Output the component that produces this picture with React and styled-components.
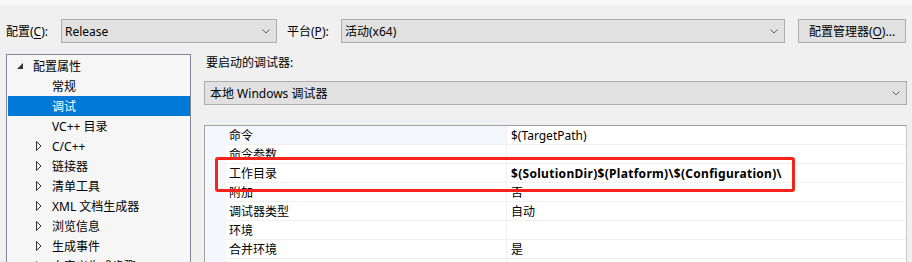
import React from "react";
import styled, { createGlobalStyle } from "styled-components";

const GlobalStyle = createGlobalStyle`
  html, body {
    margin: 0;
    padding: 0;
    height: 100%;
    overflow: hidden;
    background: #f0f0f0;
  }
  body {
    font-family: "Noto Sans", "Noto Sans CJK SC", sans-serif;
    font-size: 12px;
    color: #000;
  }
`;

const Page = styled.div`
  width: 912px;
  height: 262px;
  overflow: hidden;
  background: #f0f0f0;
  border-top: 5px solid #f9f9f9;
  box-sizing: border-box;
`;

const Toolbar = styled.div`
  display: flex;
  align-items: center;
  height: 24px;
  margin-top: 14px;
  padding-left: 6px;
`;

const Label = styled.span`
  width: ${({ w }) => w}px;
  margin-left: ${({ ml }) => ml || 0}px;
  white-space: nowrap;
  flex-shrink: 0;
`;

const Key = styled.span`
  text-decoration: underline;
  text-underline-offset: 2px;
`;

const Combo = styled.div`
  width: ${({ w }) => (w ? `${w}px` : "auto")};
  height: 24px;
  box-sizing: border-box;
  border: 1px solid #adadad;
  background: #e1e1e1;
  display: flex;
  align-items: center;
  justify-content: space-between;
  padding: 0 6px 0 3px;
  flex-shrink: 0;
`;

const Button = styled.div`
  width: 108px;
  height: 24px;
  margin-left: 13px;
  box-sizing: border-box;
  border: 1px solid #adadad;
  background: #e1e1e1;
  display: flex;
  align-items: center;
  justify-content: center;
`;

const Chevron = () => (
  <svg width="8" height="5" viewBox="0 0 8 5">
    <path d="M0.5 0.5 L4 4 L7.5 0.5" fill="none" stroke="#606060" strokeWidth="1" />
  </svg>
);

const Main = styled.div`
  display: flex;
  margin-top: 11px;
  padding-left: 6px;
`;

const Tree = styled.div`
  width: 185px;
  height: 230px;
  box-sizing: border-box;
  border: 1px solid #828790;
  background: #f6f6f6;
  padding: 1px 0 0 1px;
`;

const TreeRow = styled.div`
  height: 20px;
  display: flex;
  align-items: center;
  padding-left: ${({ level }) => (level ? 28 : 9)}px;
  background: ${({ selected }) => (selected ? "#0078d7" : "transparent")};
  color: ${({ selected }) => (selected ? "#fff" : "#000")};
  white-space: nowrap;
`;

const Expander = styled.span`
  width: 16px;
  height: 20px;
  display: flex;
  align-items: center;
  flex-shrink: 0;
`;

const Collapsed = () => (
  <svg width="6" height="10" viewBox="0 0 6 10">
    <path d="M0.5 0.5 L5 5 L0.5 9.5 Z" fill="none" stroke="#333" strokeWidth="1" />
  </svg>
);

const Expanded = () => (
  <svg width="7" height="7" viewBox="0 0 7 7">
    <path d="M6 0 L6 6 L0 6 Z" fill="#333" />
  </svg>
);

const Right = styled.div`
  margin-left: 13px;
  width: 703px;
  display: flex;
  flex-direction: column;
`;

const Caption = styled.div`
  height: 16px;
  line-height: 16px;
  padding-left: 2px;
  padding-top: 1px;
`;

const DebuggerCombo = styled(Combo)`
  margin-top: 10px;
  padding-left: 5px;
`;

const Grid = styled.div`
  position: relative;
  margin-top: 20px;
  border: 1px solid #a0a0a0;
  border-right-color: #c8c8c8;
  background: #fff;
  height: 200px;
`;

const Row = styled.div`
  display: grid;
  grid-template-columns: 21px 280px 1fr;
  height: 19px;
`;

const Gutter = styled.div`
  background: #f4f7fc;
`;

const NameCell = styled.div`
  background: ${({ active }) => (active ? "#f4f7fc" : "#fff")};
  border-bottom: 1px solid #f0f0f0;
  padding: 2px 0 0 3px;
  line-height: 16px;
  white-space: nowrap;
`;

const ValueCell = styled.div`
  border-left: 1px solid #f0f0f0;
  border-bottom: 1px solid #f0f0f0;
  padding: 2px 0 0 4px;
  line-height: 16px;
  font-weight: ${({ bold }) => (bold ? 700 : 400)};
  letter-spacing: ${({ bold }) => (bold ? "0.3px" : "0")};
  white-space: nowrap;
`;

const Highlight = styled.div`
  position: absolute;
  left: 10px;
  top: 31px;
  width: 580px;
  height: 35px;
  box-sizing: border-box;
  border: 3px solid #f5231b;
  border-radius: 3px;
  pointer-events: none;
`;

const treeItems = [
  { label: "配置属性", level: 0, state: "open" },
  { label: "常规", level: 1 },
  { label: "调试", level: 1, selected: true },
  { label: "VC++ 目录", level: 1 },
  { label: "C/C++", level: 1, state: "closed" },
  { label: "链接器", level: 1, state: "closed" },
  { label: "清单工具", level: 1, state: "closed" },
  { label: "XML 文档生成器", level: 1, state: "closed" },
  { label: "浏览信息", level: 1, state: "closed" },
  { label: "生成事件", level: 1, state: "closed" },
  { label: "自定义生成步骤", level: 1, state: "closed" },
];

const props = [
  { name: "命令", value: "$(TargetPath)", active: true },
  { name: "命令参数", value: "" },
  { name: "工作目录", value: "$(SolutionDir)$(Platform)\\$(Configuration)\\", bold: true },
  { name: "附加", value: "否" },
  { name: "调试器类型", value: "自动" },
  { name: "环境", value: "" },
  { name: "合并环境", value: "是" },
  { name: "", value: "" },
];

export default function App() {
  return (
    <Page>
      <GlobalStyle />
      <Toolbar>
        <Label w={55}>
          配置(<Key>C</Key>):
        </Label>
        <Combo w={216}>
          <span>Release</span>
          <Chevron />
        </Combo>
        <Label w={54} ml={10}>
          平台(<Key>P</Key>):
        </Label>
        <Combo w={444}>
          <span>活动(x64)</span>
          <Chevron />
        </Combo>
        <Button>
          <span>
            配置管理器(<Key>O</Key>)...
          </span>
        </Button>
      </Toolbar>
      <Main>
        <Tree>
          {treeItems.map((item) => (
            <TreeRow key={item.label} level={item.level} selected={item.selected}>
              {item.level === 0 ? (
                <Expander>
                  <Expanded />
                </Expander>
              ) : (
                <Expander>{item.state === "closed" && <Collapsed />}</Expander>
              )}
              {item.label}
            </TreeRow>
          ))}
        </Tree>
        <Right>
          <Caption>要启动的调试器:</Caption>
          <DebuggerCombo>
            <span>本地 Windows 调试器</span>
            <Chevron />
          </DebuggerCombo>
          <Grid>
            {props.map((p, i) => (
              <Row key={i}>
                <Gutter />
                <NameCell active={p.active}>{p.name}</NameCell>
                <ValueCell bold={p.bold}>{p.value}</ValueCell>
              </Row>
            ))}
            <Highlight />
          </Grid>
        </Right>
      </Main>
    </Page>
  );
}
